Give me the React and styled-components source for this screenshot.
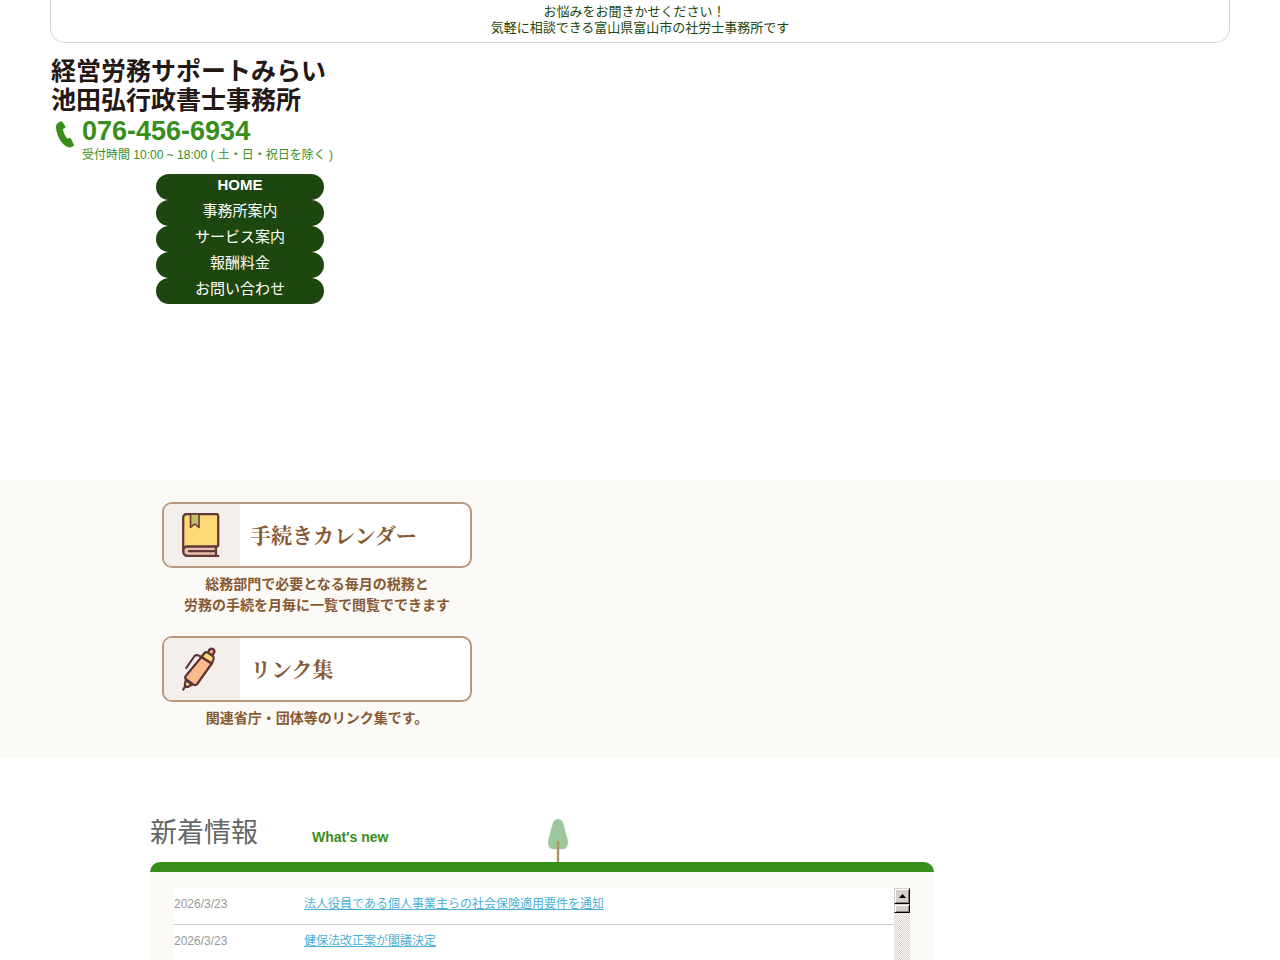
import React from "react";
import styled, { createGlobalStyle } from "styled-components";

const GlobalStyle = createGlobalStyle`
  * {
    box-sizing: border-box;
  }
  body {
    margin: 0;
    background: #fff;
    font-family: "Liberation Sans", "Noto Sans CJK JP", sans-serif;
  }
  h1, h2, p, ul {
    margin: 0;
    padding: 0;
  }
  a {
    color: inherit;
  }
`;

const Page = styled.div`
  display: flex;
  flex-direction: column;
  height: 100vh;
  overflow: hidden;
`;
const Header = styled.header`
  flex: none;
  min-height: 480px;
  padding: 0 50px;
`;
const Catch = styled.p`
  padding: 4px 0 6px;
  border: 1px solid #cfd8e0;
  border-top: 0;
  border-radius: 0 0 15px 15px;
  color: #1d470e;
  font-size: 13px;
  line-height: 16px;
  text-align: center;
`;
const Logo = styled.h1`
  padding: 14px 1px 0;
  color: #231815;
  font-size: 25px;
  line-height: 29px;
`;
const Tel = styled.div`
  display: flex;
  gap: 8px;
  padding: 2px 6px 0;
  color: #388e1b;
  svg {
    flex: none;
    margin-top: 4px;
  }
`;
const TelNumber = styled.p`
  font-size: 27px;
  font-weight: bold;
  line-height: 28px;
`;
const TelHours = styled.p`
  font-size: 12px;
  line-height: 20px;
`;
const Nav = styled.nav`
  display: flex;
  flex-direction: column;
  width: 168px;
  margin: 9px 106px 0;
`;
const NavLink = styled.a`
  height: 26px;
  border-radius: 13px;
  background: #1d470e;
  color: #fff;
  font-size: 15px;
  font-weight: ${(props) => (props.$current ? "bold" : "normal")};
  line-height: 22px;
  text-align: center;
  text-decoration: none;
`;

const Band = styled.section`
  flex: none;
  padding: 22px 0 29px;
  background: #fbfaf6;
`;
const Inner = styled.div`
  width: 100%;
  max-width: 980px;
  margin: 0 auto;
`;
const Banners = styled(Inner)`
  display: flex;
  flex-direction: column;
  gap: 20px;
  padding: 0 12px;
`;
const BannerItem = styled.div`
  width: 310px;
`;
const Banner = styled.a`
  display: flex;
  height: 66px;
  overflow: hidden;
  border: 2px solid #b9967c;
  border-radius: 10px;
  background: #fff;
  color: #875932;
  text-decoration: none;
`;
const BannerIcon = styled.span`
  display: flex;
  align-items: center;
  justify-content: center;
  width: 76px;
  padding-right: 2px;
  background: #f5efec;
`;
const BannerTitle = styled.span`
  padding-left: 10px;
  font-family: "Liberation Serif", "Noto Serif CJK JP", "Noto Sans CJK JP", serif;
  font-size: 21px;
  font-weight: bold;
  line-height: 64px;
`;
const BannerText = styled.p`
  padding-top: 6px;
  color: #875932;
  font-size: 14px;
  font-weight: bold;
  line-height: 21px;
  text-align: center;
`;

const News = styled.section`
  display: flex;
  flex: 1;
  min-height: 0;
  padding-top: 56px;
`;
const NewsHead = styled.div`
  display: grid;
  grid-template-columns: 162px 235px auto;
  align-items: end;
  height: 48px;
`;
const NewsTitle = styled.h2`
  color: #666;
  font-size: 27px;
  font-weight: normal;
  line-height: 36px;
  padding-bottom: 11px;
`;
const NewsSub = styled.p`
  color: #388e1b;
  font-size: 14px;
  font-weight: bold;
  line-height: 20px;
  padding-bottom: 15px;
`;
const NewsBox = styled.div`
  display: flex;
  width: 80%;
  min-height: 300px;
  padding: 16px 24px;
  border-top: 10px solid #388e1b;
  border-radius: 10px 10px 0 0;
  background: #fbfaf6;
`;
const NewsList = styled.ul`
  flex: 1;
  background: #fff;
  list-style: none;
`;
const NewsItem = styled.li`
  display: grid;
  grid-template-columns: 130px 1fr;
  height: 37px;
  border-bottom: 1px solid #ccc;
  color: #999;
  font-size: 12px;
  line-height: 32px;
  a {
    color: #4bb0d6;
  }
`;
const ScrollBar = styled.div`
  width: 16px;
  background: repeating-conic-gradient(#d4d0c8 0 25%, #fff 0 50%) 0 0 / 2px 2px;
`;
const ScrollPart = styled.div`
  display: flex;
  align-items: center;
  justify-content: center;
  height: ${(props) => props.$height}px;
  border: 1px solid #d4d0c8;
  border-right-color: #000;
  border-bottom-color: #000;
  background: #d4d0c8;
  box-shadow: inset 1px 1px #fff, inset -1px -1px #808080;
`;

const PhoneIcon = () => (
  <svg width="18" height="27" viewBox="0 0 18 27" fill="#388e1b" aria-hidden="true">
    <path d="M1.8 2 4.500.4C5.200 0 5.800.1 6.300.8L9.300 5.300C9.700 6 9.500 6.500 8.900 6.900L7 8.200C7.300 11.500 9 15.300 11.700 17.700L13.300 17C14 16.800 14.500 17 14.900 17.600L17.800 23.400C18.200 24.100 18 24.600 17.300 25L14.500 26.400C12.500 27 8.400 25.200 5.200 20.800C2.200 16.600.3 11.200 0 7C-.1 4.800.5 3.100 1.800 2Z" />
  </svg>
);

const BookIcon = () => (
  <svg width="38" height="44" viewBox="0 0 38 44" fill="none" stroke="#613938" strokeWidth="2.300" strokeLinejoin="round" strokeLinecap="round" aria-hidden="true">
    <path d="M5 33h29v9H5c-5 0-5-9 0-9Z" fill="#edbfae" stroke="none" />
    <path d="M1.200 38V5q0-4 4-4h29q2 0 2 2v29q0 1.500-2 1.500H5.500Q1.200 33.500 1.200 38Z" fill="#ffd978" />
    <path d="M1.200 38q0 5 5 5h30M7 38.200h27M34 34v8" />
    <path d="M8.500 1v13.500l4.200-3.500 4.300 3.500V1Z" fill="#c3bd68" strokeWidth="1.600" />
  </svg>
);

const PenIcon = () => (
  <svg width="38" height="44" viewBox="0 0 38 44" fill="none" stroke="#5a3237" strokeWidth="2.200" strokeLinejoin="round" strokeLinecap="round" aria-hidden="true">
    <path d="m26 6 1.200-3q1.600-2.200 4-.8 2.200 1.800.6 4L29.500 9Z" fill="#f6a878" />
    <path d="M3.800 33 2.800 38q.5 2.200 3 2L10 37.500Z" fill="#ffd978" />
    <path d="M19.500 10 3.700 29q-1.200 2 .5 3.500l7 5q2.300 1.300 4-.5L29.800 16.500Z" fill="#fcb98a" />
    <path d="m19.500 10 3-4q1.300-1.500 3.300-.3l5 3.300q1.500 1.300.8 3.200L29.800 16.500Z" fill="#ffd978" />
    <path d="M18.500 9.500q-3.500-2.500-6-.5L4.300 21M1.300 42.500 3 39.500" />
  </svg>
);

const TreeIcon = () => (
  <svg width="22" height="43" viewBox="0 0 22 43" aria-hidden="true">
    <path d="M6 3.500Q7.500 0 11 0t5 3.500L20.500 20Q22.500 30 15 30.300H7Q-.5 30 1.500 20Z" fill="#9dc89b" />
    <path d="M11 22v21" stroke="#ad9566" strokeWidth="2.400" />
  </svg>
);

const menu = ["HOME", "事務所案内", "サービス案内", "報酬料金", "お問い合わせ"];

const news = [
  { date: "2026/3/23", title: "法人役員である個人事業主らの社会保険適用要件を通知" },
  { date: "2026/3/23", title: "健保法改正案が閣議決定" },
];

export default function App() {
  return (
    <>
      <GlobalStyle />
      <Page lang="ja">
        <Header>
          <Catch>
            お悩みをお聞きかせください！&nbsp;&nbsp;&nbsp;
            <br />
            気軽に相談できる富山県富山市の社労士事務所です
          </Catch>
          <Logo>
            経営労務サポートみらい
            <br />
            池田弘行政書士事務所
          </Logo>
          <Tel>
            <PhoneIcon />
            <div>
              <TelNumber>076-456-6934</TelNumber>
              <TelHours>受付時間 10:00 ~ 18:00 ( 土・日・祝日を除く )</TelHours>
            </div>
          </Tel>
          <Nav>
            {menu.map((label, i) => (
              <NavLink key={label} href="#" $current={i === 0}>
                {label}
              </NavLink>
            ))}
          </Nav>
        </Header>

        <Band>
          <Banners>
            <BannerItem>
              <Banner href="#">
                <BannerIcon>
                  <BookIcon />
                </BannerIcon>
                <BannerTitle>手続きカレンダー</BannerTitle>
              </Banner>
              <BannerText>
                総務部門で必要となる毎月の税務と
                <br />
                労務の手続を月毎に一覧で閲覧でできます
              </BannerText>
            </BannerItem>
            <BannerItem>
              <Banner href="#">
                <BannerIcon>
                  <PenIcon />
                </BannerIcon>
                <BannerTitle>リンク集</BannerTitle>
              </Banner>
              <BannerText>関連省庁・団体等のリンク集です。</BannerText>
            </BannerItem>
          </Banners>
        </Band>

        <News>
          <Inner>
            <NewsHead>
              <NewsTitle>新着情報</NewsTitle>
              <NewsSub>What's new</NewsSub>
              <TreeIcon />
            </NewsHead>
            <NewsBox>
              <NewsList>
                {news.map((item) => (
                  <NewsItem key={item.title}>
                    <span>{item.date}</span>
                    <a href="#">{item.title}</a>
                  </NewsItem>
                ))}
              </NewsList>
              <ScrollBar aria-hidden="true">
                <ScrollPart $height={16}>
                  <svg width="7" height="4" viewBox="0 0 7 4">
                    <path d="M3.500 0 7 4H0Z" />
                  </svg>
                </ScrollPart>
                <ScrollPart $height={9} />
              </ScrollBar>
            </NewsBox>
          </Inner>
        </News>
      </Page>
    </>
  );
}
